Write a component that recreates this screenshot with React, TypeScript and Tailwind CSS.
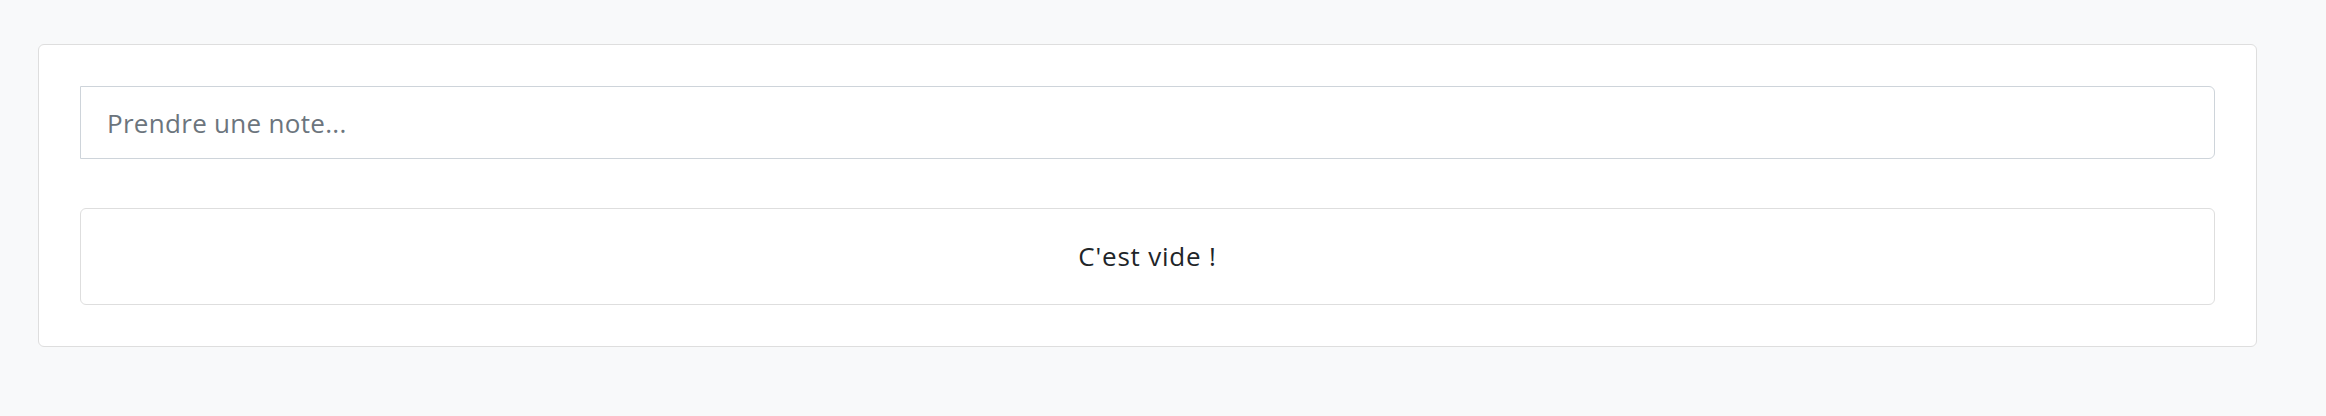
import React from 'react';

export default function App()
{
    return (
        <div className="min-h-[416px] bg-[#f8f9fa] pt-[44px] pl-[38px]" style={{ fontFamily: '"Open Sans", "Noto Sans", sans-serif' }}>
            <div className="w-[2219px] bg-white border border-[#dedede] rounded-[6px] p-[41px]">
                <input
                    type="text"
                    placeholder="Prendre une note..."
                    className="block w-full h-[73px] border border-[#ced4da] rounded-r-[6px] bg-white pl-[26px] pr-4 text-[26px] tracking-[0.3px] text-[#495057] placeholder:text-[#6c757d] outline-none"
                />
                <div className="mt-[49px] h-[97px] flex items-center justify-center border border-[#dedede] rounded-[6px] text-[26px] tracking-[0.8px] text-[#212529]">
                    C'est vide !
                </div>
            </div>
        </div>
    )
}
